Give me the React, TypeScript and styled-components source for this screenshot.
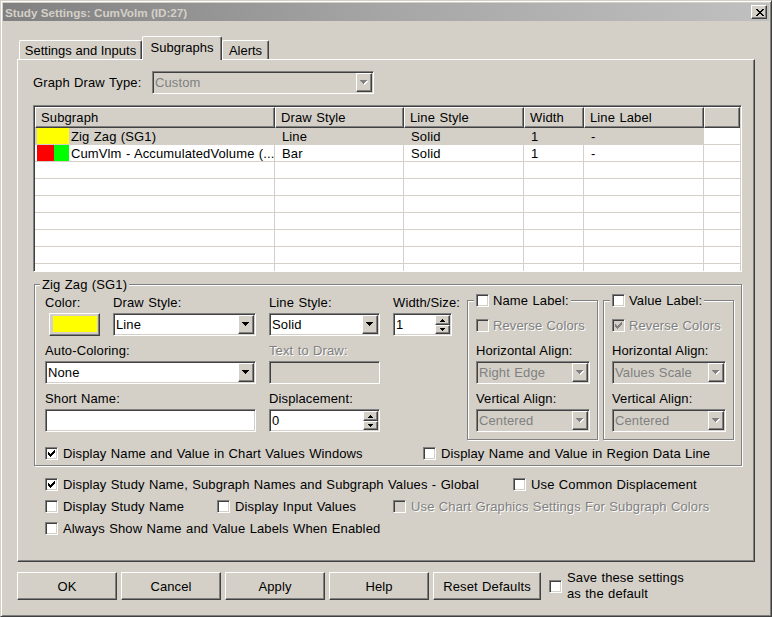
import React from "react";
import styled, { createGlobalStyle, css } from "styled-components";

const GlobalStyle = createGlobalStyle`
  html, body { margin: 0; padding: 0; background: #d4d0c8; }
  body {
    font-family: "Liberation Sans", Arial, sans-serif;
    font-size: 13px;
    color: #000;
    letter-spacing: 0.12px;
    word-spacing: 0.6px;
  }
  * { box-sizing: border-box; }
`;

const FACE = "#d4d0c8";
const SHADOW = "#808080";

const raised = css`
  border: 1px solid;
  border-color: #fff #404040 #404040 #fff;
  box-shadow: inset -1px -1px 0 #808080;
`;

const sunken = css`
  border: 1px solid;
  border-color: #808080 #fff #fff #808080;
  box-shadow: inset 1px 1px 0 #404040, inset -1px -1px 0 #d4d0c8;
`;

const etched = css`
  border: 1px solid #808080;
  box-shadow: inset 1px 1px 0 #fff, 1px 1px 0 #fff;
`;

const disabledText = css`
  color: #808080;
  text-shadow: 1px 1px 0 #fff;
`;

const Window = styled.div`
  width: 772px;
  height: 617px;
  border: 1px solid;
  border-color: #d4d0c8 #404040 #404040 #d4d0c8;
  box-shadow: inset 1px 1px 0 #fff, inset -1px -1px 0 #808080;
  padding: 2px;
  display: flex;
  flex-direction: column;
  background: ${FACE};
`;

const TitleBar = styled.div`
  height: 18px;
  display: flex;
  align-items: center;
  justify-content: space-between;
  padding: 0 2px 0 0;
  background: linear-gradient(90deg, #808080 0%, #a6a6a6 50%, #c0c0c0 100%);
`;

const TitleText = styled.span`
  font-weight: bold;
  font-size: 11.7px;
  letter-spacing: 0;
  word-spacing: 0;
  color: #d4d0c8;
  padding-left: 2px;
  white-space: nowrap;
`;

const CloseButton = styled.div`
  width: 16px;
  height: 14px;
  ${raised};
  background: ${FACE};
  display: flex;
  align-items: center;
  justify-content: center;
  padding-left: 1px;
`;

const Body = styled.div`
  padding: 15px 14px 0 14px;
  display: flex;
  flex-direction: column;
`;

const TabStrip = styled.div`
  height: 23px;
  display: flex;
  align-items: flex-end;
  padding-left: 2px;
`;

const Tab = styled.div<{ $w: number; $active?: boolean }>`
  position: relative;
  z-index: ${(p) => (p.$active ? 2 : 1)};
  width: ${(p) => p.$w}px;
  height: ${(p) => (p.$active ? 24 : 19)}px;
  margin-bottom: ${(p) => (p.$active ? -1 : 0)}px;
  background: ${FACE};
  border-top: 1px solid #fff;
  border-left: 1px solid #fff;
  border-right: 1px solid #404040;
  box-shadow: inset -1px 0 0 #808080;
  border-radius: 2px 2px 0 0;
  display: flex;
  align-items: center;
  justify-content: center;
  padding-bottom: ${(p) => (p.$active ? 2 : 0)}px;
  white-space: nowrap;
  letter-spacing: 0;
  word-spacing: 0;
`;

const Panel = styled.div`
  width: 738px;
  height: 503px;
  border-top: 1px solid #fff;
  border-left: 1px solid #fff;
  border-right: 1px solid #404040;
  border-bottom: 1px solid #404040;
  box-shadow: inset -1px -1px 0 #808080;
  padding: 11px 0 0 15px;
  display: flex;
  flex-direction: column;
`;

const DrawTypeRow = styled.div`
  display: flex;
  align-items: center;
  height: 23px;
`;

const DrawTypeLabel = styled.span`
  width: 119px;
  white-space: nowrap;
`;

/* ---------- combo / edit / spinner ---------- */

const ComboBox = styled.div<{ $w: number; $disabled?: boolean }>`
  width: ${(p) => p.$w}px;
  height: 23px;
  ${sunken};
  padding: 1px;
  background: ${(p) => (p.$disabled ? FACE : "#fff")};
  color: ${(p) => (p.$disabled ? SHADOW : "#000")};
  display: flex;
  align-items: center;
  flex-shrink: 0;
`;

const ComboText = styled.span`
  flex: 1;
  padding-left: 1px;
  white-space: nowrap;
  overflow: hidden;
`;

const ComboButton = styled.span`
  width: 16px;
  height: 19px;
  ${raised};
  background: ${FACE};
  display: flex;
  align-items: center;
  justify-content: center;
  flex-shrink: 0;
`;

const EditBox = styled.div<{ $w: number; $disabled?: boolean }>`
  width: ${(p) => p.$w}px;
  height: 23px;
  ${sunken};
  padding: 1px 1px 1px 2px;
  background: ${(p) => (p.$disabled ? FACE : "#fff")};
  display: flex;
  align-items: center;
  flex-shrink: 0;
`;

const EditText = styled.span`
  flex: 1;
  white-space: nowrap;
`;

const SpinColumn = styled.span`
  width: 15px;
  height: 19px;
  display: flex;
  flex-direction: column;
`;

const SpinButton = styled.span<{ $h: number }>`
  height: ${(p) => p.$h}px;
  ${raised};
  background: ${FACE};
  display: flex;
  align-items: center;
  justify-content: center;
`;

const ColorButton = styled.div`
  width: 51px;
  height: 23px;
  margin-left: 4px;
  ${raised};
  background: ${FACE};
  display: flex;
  align-items: center;
  justify-content: center;
  padding-bottom: 1px;
`;

const ColorFill = styled.span<{ $c: string }>`
  width: 44px;
  height: 16px;
  background: ${(p) => p.$c};
`;

/* ---------- table ---------- */

const Table = styled.div`
  margin-top: 11px;
  width: 709px;
  height: 167px;
  flex-shrink: 0;
  ${sunken};
  padding: 1px;
  background: #fff;
  overflow: hidden;
`;

const HeaderRow = styled.div`
  display: flex;
  height: 21px;
`;

const HeaderCell = styled.div<{ $w: number }>`
  width: ${(p) => p.$w}px;
  flex-shrink: 0;
  ${raised};
  background: ${FACE};
  padding-left: 5px;
  display: flex;
  align-items: center;
  white-space: nowrap;
`;

const Row = styled.div`
  display: flex;
  height: 17px;
`;

const Cell = styled.div<{ $w: number; $sel?: boolean; $last?: boolean }>`
  width: ${(p) => p.$w}px;
  flex-shrink: 0;
  background: ${(p) => (p.$sel ? FACE : "#fff")};
  border-bottom: 1px solid #d4d0c8;
  border-right: ${(p) => (p.$last ? "none" : "1px solid #d4d0c8")};
  padding-left: 7px;
  display: flex;
  align-items: center;
  white-space: nowrap;
  overflow: hidden;
`;

const NameCell = styled(Cell)`
  padding-left: 2px;
  align-items: stretch;
`;

const Swatch = styled.span<{ $c: string; $w: number }>`
  width: ${(p) => p.$w}px;
  background: ${(p) => p.$c};
  flex-shrink: 0;
`;

const NameText = styled.span`
  margin-left: 2px;
  display: flex;
  align-items: center;
`;

/* ---------- groups ---------- */

const MainGroup = styled.div`
  position: relative;
  ${etched};
  width: 708px;
  margin: 12px 0 0 1px;
  padding: 10px 6px 4px 10px;
  flex-shrink: 0;
`;

const Legend = styled.div<{ $left: number }>`
  position: absolute;
  top: -8px;
  left: ${(p) => p.$left}px;
  padding: 0 2px;
  background: ${FACE};
  line-height: 15px;
  height: 15px;
  display: flex;
  align-items: center;
  white-space: nowrap;
`;

const FieldsRow = styled.div`
  display: flex;
  align-items: flex-start;
  height: 137px;
`;

const Column = styled.div<{ $w: number; $ml?: number }>`
  width: ${(p) => p.$w}px;
  margin-left: ${(p) => p.$ml ?? 0}px;
  display: flex;
  flex-direction: column;
  gap: 7px;
  flex-shrink: 0;
`;

const PairRow = styled.div`
  display: flex;
  gap: 13px;
`;

const Field = styled.div<{ $mt?: number }>`
  display: flex;
  flex-direction: column;
  margin-top: ${(p) => p.$mt ?? 0}px;
`;

const FieldLabel = styled.span<{ $disabled?: boolean }>`
  height: 16px;
  line-height: 16px;
  margin-bottom: 2px;
  white-space: nowrap;
  ${(p) => (p.$disabled ? disabledText : "")}
`;

const SubGroup = styled.div<{ $ml: number }>`
  position: relative;
  ${etched};
  width: 131px;
  height: 140px;
  margin: 5px 0 0 ${(p) => p.$ml}px;
  padding: 17px 7px 0 8px;
  display: flex;
  flex-direction: column;
  flex-shrink: 0;
`;

const CheckRow = styled.div`
  margin-top: 14px;
  display: grid;
  grid-template-columns: 378px 1fr;
  align-items: center;
`;

const LowerGrid = styled.div`
  margin: 11px 0 0 12px;
  display: grid;
  grid-template-columns: 172px 176px 120px 1fr;
  row-gap: 7px;
`;

const GridItem = styled.div<{ $col: string }>`
  grid-column: ${(p) => p.$col};
`;

/* ---------- checkbox ---------- */

const CheckLabel = styled.label<{ $gap?: number }>`
  display: flex;
  align-items: center;
  gap: ${(p) => p.$gap ?? 5}px;
  height: 15px;
  line-height: 15px;
  white-space: nowrap;
`;

const CheckBoxBox = styled.span<{ $disabled?: boolean }>`
  width: 13px;
  height: 13px;
  flex-shrink: 0;
  ${sunken};
  background: ${(p) => (p.$disabled ? FACE : "#fff")};
  display: flex;
  align-items: center;
  justify-content: center;
`;

const CheckText = styled.span<{ $disabled?: boolean }>`
  ${(p) => (p.$disabled ? disabledText : "")}
`;

/* ---------- buttons ---------- */

const ButtonRow = styled.div`
  margin-top: 10px;
  height: 28px;
  display: flex;
  align-items: center;
  gap: 4px;
`;

const Button = styled.button<{ $w: number }>`
  width: ${(p) => p.$w}px;
  height: 28px;
  ${raised};
  background: ${FACE};
  font: inherit;
  letter-spacing: inherit;
  word-spacing: inherit;
  color: #000;
  padding: 0;
  margin: 0;
  flex-shrink: 0;
`;

const SaveBlock = styled.div`
  margin-left: 4px;
  display: flex;
  align-items: center;
  gap: 5px;
`;

const SaveText = styled.span`
  line-height: 16px;
  white-space: nowrap;
`;

/* ---------- glyphs ---------- */

const CloseGlyph = () => (
  <svg width="8" height="7" viewBox="0 0 8 7" shapeRendering="crispEdges">
    <path
      fill="#000"
      d="M0 0h2v1h-2z M6 0h2v1h-2z M1 1h2v1h-2z M5 1h2v1h-2z M2 2h4v1h-4z M3 3h2v1h-2z M2 4h4v1h-4z M1 5h2v1h-2z M5 5h2v1h-2z M0 6h2v1h-2z M6 6h2v1h-2z"
    />
  </svg>
);

const CheckGlyph = ({ color }: { color: string }) => (
  <svg width="7" height="7" viewBox="0 0 7 7" shapeRendering="crispEdges">
    <path
      fill={color}
      d="M6 0h1v1h-1z M5 1h2v1h-2z M0 2h1v1h-1z M4 2h3v1h-3z M0 3h2v1h-2z M3 3h3v1h-3z M0 4h5v1h-5z M1 5h3v1h-3z M2 6h1v1h-1z"
    />
  </svg>
);

const DownArrow = ({ disabled }: { disabled?: boolean }) => (
  <svg width="8" height="5" viewBox="0 0 8 5" shapeRendering="crispEdges">
    {disabled && <path fill="#fff" d="M1 1h7v1h-7z M2 2h5v1h-5z M3 3h3v1h-3z M4 4h1v1h-1z" />}
    <path
      fill={disabled ? SHADOW : "#000"}
      d="M0 0h7v1h-7z M1 1h5v1h-5z M2 2h3v1h-3z M3 3h1v1h-1z"
    />
  </svg>
);

const SpinArrow = ({ up }: { up?: boolean }) => (
  <svg width="5" height="3" viewBox="0 0 5 3" shapeRendering="crispEdges">
    <path
      fill="#000"
      d={up ? "M2 0h1v1h-1z M1 1h3v1h-3z M0 2h5v1h-5z" : "M0 0h5v1h-5z M1 1h3v1h-3z M2 2h1v1h-1z"}
    />
  </svg>
);

/* ---------- composite controls ---------- */

const Combo = ({ w, value, disabled }: { w: number; value: string; disabled?: boolean }) => (
  <ComboBox $w={w} $disabled={disabled}>
    <ComboText>{value}</ComboText>
    <ComboButton>
      <DownArrow disabled={disabled} />
    </ComboButton>
  </ComboBox>
);

const Spinner = ({ w, value }: { w: number; value: string }) => (
  <EditBox $w={w}>
    <EditText>{value}</EditText>
    <SpinColumn>
      <SpinButton $h={10}>
        <SpinArrow up />
      </SpinButton>
      <SpinButton $h={9}>
        <SpinArrow />
      </SpinButton>
    </SpinColumn>
  </EditBox>
);

const CheckBox = ({
  label,
  checked,
  disabled,
  gap,
}: {
  label: React.ReactNode;
  checked?: boolean;
  disabled?: boolean;
  gap?: number;
}) => (
  <CheckLabel $gap={gap}>
    <CheckBoxBox $disabled={disabled}>
      {checked && <CheckGlyph color={disabled ? SHADOW : "#000"} />}
    </CheckBoxBox>
    <CheckText $disabled={disabled}>{label}</CheckText>
  </CheckLabel>
);

/* ---------- data ---------- */

const columns = [
  { title: "Subgraph", w: 240 },
  { title: "Draw Style", w: 129 },
  { title: "Line Style", w: 120 },
  { title: "Width", w: 60 },
  { title: "Line Label", w: 120 },
  { title: "", w: 36 },
];

type Sub = {
  swatches: { c: string; w: number }[];
  name: string;
  draw: string;
  line: string;
  width: string;
  label: string;
  sel?: boolean;
};

const rows: Sub[] = [
  { swatches: [{ c: "#ffff00", w: 32 }], name: "Zig Zag (SG1)", draw: "Line", line: "Solid", width: "1", label: "-", sel: true },
  {
    swatches: [
      { c: "#ff0000", w: 17 },
      { c: "#00ff00", w: 15 },
    ],
    name: "CumVlm - AccumulatedVolume (...",
    draw: "Bar",
    line: "Solid",
    width: "1",
    label: "-",
  },
];

const EMPTY_ROWS = 7;

const LabelGroup = ({
  title,
  reverseChecked,
  hAlign,
  ml,
}: {
  title: string;
  reverseChecked?: boolean;
  hAlign: string;
  ml: number;
}) => (
  <SubGroup $ml={ml}>
    <Legend $left={6}>
      <CheckBox label={title} gap={4} />
    </Legend>
    <CheckBox label="Reverse Colors" disabled checked={reverseChecked} gap={4} />
    <Field $mt={10}>
      <FieldLabel>Horizontal Align:</FieldLabel>
      <Combo w={114} value={hAlign} disabled />
    </Field>
    <Field $mt={7}>
      <FieldLabel>Vertical Align:</FieldLabel>
      <Combo w={114} value="Centered" disabled />
    </Field>
  </SubGroup>
);

export default function App() {
  return (
    <>
      <GlobalStyle />
      <Window>
        <TitleBar>
          <TitleText>Study Settings: CumVolm (ID:27)</TitleText>
          <CloseButton aria-label="Close">
            <CloseGlyph />
          </CloseButton>
        </TitleBar>
        <Body>
          <TabStrip>
            <Tab $w={123}>Settings and Inputs</Tab>
            <Tab $w={80} $active>
              Subgraphs
            </Tab>
            <Tab $w={47}>Alerts</Tab>
          </TabStrip>
          <Panel>
            <DrawTypeRow>
              <DrawTypeLabel>Graph Draw Type:</DrawTypeLabel>
              <Combo w={222} value="Custom" disabled />
            </DrawTypeRow>

            <Table>
              <HeaderRow>
                {columns.map((c, i) => (
                  <HeaderCell key={i} $w={c.w}>
                    {c.title}
                  </HeaderCell>
                ))}
              </HeaderRow>
              {rows.map((r, i) => (
                <Row key={i}>
                  <NameCell $w={240} $sel={r.sel}>
                    {r.swatches.map((s, j) => (
                      <Swatch key={j} $c={s.c} $w={s.w} />
                    ))}
                    <NameText>{r.name}</NameText>
                  </NameCell>
                  <Cell $w={129} $sel={r.sel}>
                    {r.draw}
                  </Cell>
                  <Cell $w={120} $sel={r.sel}>
                    {r.line}
                  </Cell>
                  <Cell $w={60} $sel={r.sel}>
                    {r.width}
                  </Cell>
                  <Cell $w={120} $sel={r.sel}>
                    {r.label}
                  </Cell>
                  <Cell $w={36} $last />
                </Row>
              ))}
              {Array.from({ length: EMPTY_ROWS }).map((_, i) => (
                <Row key={`e${i}`}>
                  {columns.map((c, j) => (
                    <Cell key={j} $w={c.w} $last={j === columns.length - 1} />
                  ))}
                </Row>
              ))}
            </Table>

            <MainGroup>
              <Legend $left={5}>Zig Zag (SG1)</Legend>
              <FieldsRow>
                <Column $w={211}>
                  <PairRow>
                    <Field>
                      <FieldLabel>Color:</FieldLabel>
                      <ColorButton>
                        <ColorFill $c="#ffff00" />
                      </ColorButton>
                    </Field>
                    <Field>
                      <FieldLabel>Draw Style:</FieldLabel>
                      <Combo w={143} value="Line" />
                    </Field>
                  </PairRow>
                  <Field>
                    <FieldLabel>Auto-Coloring:</FieldLabel>
                    <Combo w={211} value="None" />
                  </Field>
                  <Field>
                    <FieldLabel>Short Name:</FieldLabel>
                    <EditBox $w={211}>
                      <EditText />
                    </EditBox>
                  </Field>
                </Column>
                <Column $w={111} $ml={13}>
                  <Field>
                    <FieldLabel>Line Style:</FieldLabel>
                    <Combo w={111} value="Solid" />
                  </Field>
                  <Field>
                    <FieldLabel $disabled>Text to Draw:</FieldLabel>
                    <EditBox $w={111} $disabled>
                      <EditText />
                    </EditBox>
                  </Field>
                  <Field>
                    <FieldLabel>Displacement:</FieldLabel>
                    <Spinner w={111} value="0" />
                  </Field>
                </Column>
                <Column $w={59} $ml={13}>
                  <Field>
                    <FieldLabel>Width/Size:</FieldLabel>
                    <Spinner w={59} value="1" />
                  </Field>
                </Column>
                <LabelGroup title="Name Label:" hAlign="Right Edge" ml={15} />
                <LabelGroup title="Value Label:" hAlign="Values Scale" reverseChecked ml={5} />
              </FieldsRow>
              <CheckRow>
                <CheckBox label="Display Name and Value in Chart Values Windows" checked />
                <CheckBox label="Display Name and Value in Region Data Line" />
              </CheckRow>
            </MainGroup>

            <LowerGrid>
              <GridItem $col="1 / 4">
                <CheckBox label="Display Study Name, Subgraph Names and Subgraph Values - Global" checked />
              </GridItem>
              <GridItem $col="4 / 5">
                <CheckBox label="Use Common Displacement" />
              </GridItem>
              <GridItem $col="1 / 2">
                <CheckBox label="Display Study Name" />
              </GridItem>
              <GridItem $col="2 / 3">
                <CheckBox label="Display Input Values" />
              </GridItem>
              <GridItem $col="3 / 5">
                <CheckBox label="Use Chart Graphics Settings For Subgraph Colors" disabled />
              </GridItem>
              <GridItem $col="1 / 5">
                <CheckBox label="Always Show Name and Value Labels When Enabled" />
              </GridItem>
            </LowerGrid>
          </Panel>

          <ButtonRow>
            <Button $w={100}>OK</Button>
            <Button $w={100}>Cancel</Button>
            <Button $w={100}>Apply</Button>
            <Button $w={100}>Help</Button>
            <Button $w={108}>Reset Defaults</Button>
            <SaveBlock>
              <CheckBoxBox />
              <SaveText>
                Save these settings
                <br />
                as the default
              </SaveText>
            </SaveBlock>
          </ButtonRow>
        </Body>
      </Window>
    </>
  );
}
